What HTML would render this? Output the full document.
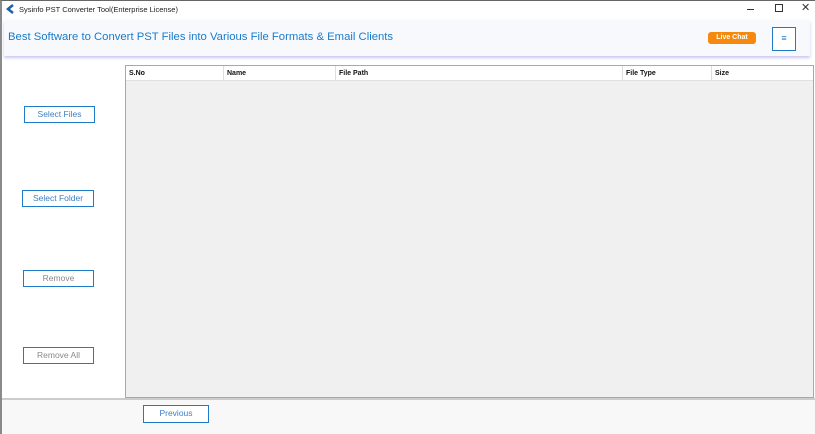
<!DOCTYPE html>
<html><head><meta charset="utf-8"><style>
*{margin:0;padding:0;box-sizing:border-box}
body{width:815px;height:434px;overflow:hidden;background:#fff;font-family:"Liberation Sans",sans-serif;position:relative}
.abs{position:absolute}
.win{left:0;top:0;width:815px;height:434px;border-left:2px solid #8a8a8a;border-top:1px solid #666}
.title{left:19px;top:5px;font-size:7.5px;color:#222}
.banner{left:4px;top:20px;width:806px;height:36px;background:#f8f9fd;box-shadow:0 2px 3px #c9c6f0}
.bt{left:8px;top:31px;font-size:11.3px;color:#1a7bc9}
.live{left:708px;top:32px;width:48px;height:12px;background:#f5890d;border-radius:3px;color:#fff;font-size:7px;font-weight:bold;text-align:center;line-height:12px}
.menu{left:772px;top:27px;width:24px;height:24px;border:1.5px solid #1f7ac7;background:#fff;color:#1f7ac7;font-size:9px;text-align:center;line-height:21px}
.tbl{left:125px;top:65px;width:689px;height:333px;border:1px solid #a8a8a8;background:#f0f0f0}
.th{position:absolute;top:0;height:15px;background:#fff;border-right:1px solid #ddd;border-bottom:1px solid #e0e0e0;font-size:7px;font-weight:bold;padding-left:3px;line-height:15px;color:#111}
.btn{position:absolute;border:1.5px solid #1f7ac7;background:#fff;font-size:8.5px;text-align:center;color:#3c7fc4}
.g{color:#888}
.bottom{left:2px;top:398px;width:813px;height:36px;background:#f8f8f8;border-top:2px solid #ccc}
</style></head><body>
<div class="abs win"></div>
<svg class="abs" style="left:6px;top:4px" width="10" height="10"><path d="M7 1 L2 5 L7 9" stroke="#1f5fa8" stroke-width="2.5" fill="none"/></svg>
<div class="abs title">Sysinfo PST Converter Tool(Enterprise License)</div>
<div class="abs" style="left:747px;top:9px;width:7px;height:1px;background:#333"></div>
<div class="abs" style="left:775px;top:4px;width:8px;height:8px;border:1px solid #333"></div>
<div class="abs" style="left:801px;top:1px;font-size:11px;color:#333">✕</div>
<div class="abs banner"></div>
<div class="abs bt">Best Software to Convert PST Files into Various File Formats &amp; Email Clients</div>
<div class="abs live">Live Chat</div>
<div class="abs menu">≡</div>
<div class="abs tbl">
<div class="th" style="left:0;width:98px">S.No</div>
<div class="th" style="left:98px;width:112px">Name</div>
<div class="th" style="left:210px;width:287px">File Path</div>
<div class="th" style="left:497px;width:89px">File Type</div>
<div class="th" style="left:586px;width:101px;border-right:none">Size</div>
</div>
<div class="btn" style="left:24px;top:106px;width:71px;height:17px;line-height:14px">Select Files</div>
<div class="btn" style="left:22px;top:190px;width:72px;height:17px;line-height:14px">Select Folder</div>
<div class="btn g" style="left:23px;top:270px;width:71px;height:17px;line-height:14px">Remove</div>
<div class="btn g" style="left:23px;top:347px;width:71px;height:17px;line-height:14px">Remove All</div>
<div class="abs bottom"></div>
<div class="btn" style="left:143px;top:405px;width:66px;height:18px;line-height:15px">Previous</div>
</body></html>
